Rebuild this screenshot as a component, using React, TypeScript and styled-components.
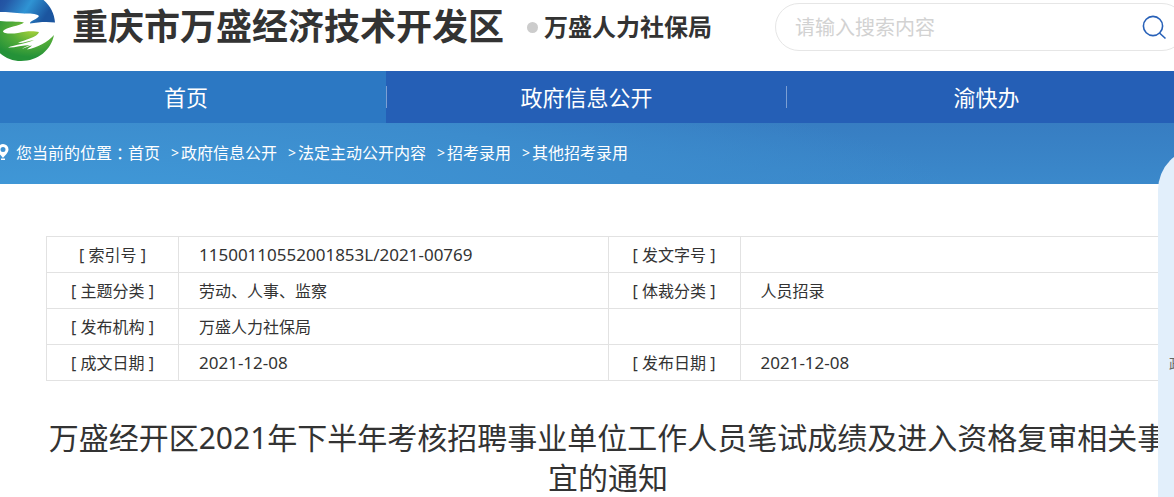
import React from "react";
import styled, { createGlobalStyle } from "styled-components";

const GlobalStyle = createGlobalStyle`
  *, *::before, *::after { box-sizing: border-box; }
  body {
    margin: 0;
    background: #fff;
    color: #333;
    font-family: "Noto Sans", "Noto Sans CJK SC", sans-serif;
    font-size: 16px;
  }
  a { color: inherit; text-decoration: none; }
`;

const Page = styled.div`
  position: relative;
  overflow: hidden;
`;

/* The site column is slightly wider than the window and bleeds off both sides. */
const Column = styled.div`
  margin: 0 -12px 0 -14px;
`;

const Header = styled(Column)`
  display: flex;
  align-items: center;
  height: 71px;
  padding-bottom: 17px;
`;

const Logo = styled.svg`
  flex: none;
  width: 70px;
  height: 70px;
  margin-right: 16px;
`;

const SiteName = styled.h1`
  margin: 0;
  font-size: 36px;
  line-height: 48px;
  font-weight: 700;
  white-space: nowrap;
`;

const Dot = styled.span`
  flex: none;
  width: 11px;
  height: 11px;
  margin: 0 6px 0 23px;
  border-radius: 50%;
  background: #ccc;
`;

const Department = styled.h2`
  margin: 0;
  font-size: 24px;
  line-height: 32px;
  font-weight: 700;
  white-space: nowrap;
`;

const Search = styled.form`
  display: flex;
  align-items: center;
  flex: 1;
  min-width: 0;
  height: 48px;
  margin-left: 63px;
  padding: 0 18px 0 19px;
  border: 1px solid #e6e6e6;
  border-radius: 24px;
`;

const SearchInput = styled.input`
  flex: 1;
  min-width: 0;
  height: 40px;
  padding: 0;
  border: 0;
  outline: 0;
  background: transparent;
  color: #333;
  font-family: inherit;
  font-size: 20px;
  &::placeholder { color: #d2d2d2; opacity: 1; }
`;

const SearchButton = styled.button`
  display: flex;
  padding: 0;
  border: 0;
  background: none;
  cursor: pointer;
`;

const NavBar = styled.nav`
  background: #255fb6;
`;

const NavList = styled(Column)`
  display: grid;
  grid-template-columns: repeat(3, 1fr);
`;

const NavItem = styled.a<{ $active?: boolean }>`
  display: flex;
  align-items: center;
  height: 52px;
  background: ${(p) => (p.$active ? "#2c78c3" : "transparent")};
  color: #fff;
  font-size: 22px;
  line-height: 32px;
  &:not(:first-child)::before {
    content: "";
    width: 1px;
    height: 22px;
    background: #7c9fd3;
  }
`;

const NavLabel = styled.span`
  flex: 1;
  text-align: center;
`;

const CrumbBand = styled.div`
  background: radial-gradient(ellipse 900px 130px at 5% 120%, #4099d8 0%, #3c8ccd 65%, rgba(60, 140, 205, 0) 100%),
    linear-gradient(to bottom, #377dc2, #3b89cb);
  color: #fff;
`;

const Crumbs = styled(Column)`
  display: flex;
  align-items: center;
  height: 61px;
  padding: 0 0 2px 10px;
  line-height: 24px;
  white-space: nowrap;
`;

const PinIcon = styled.svg`
  flex: none;
  width: 14px;
  height: 18px;
  margin-right: 6px;
`;

const Colon = styled.span`
  width: 16px;
  font-family: "Noto Sans CJK TC", sans-serif;
`;

const Crumb = styled.a`
  display: flex;
  & + &::before {
    content: ">";
    width: 10px;
    margin-left: 11px;
    font-size: 14px;
  }
`;

const Content = styled.main`
  padding: 52px 4px 0 46px;
`;

const InfoTable = styled.table`
  width: 100%;
  border-collapse: collapse;
  table-layout: fixed;
  line-height: 24px;
`;

const LabelCell = styled.th`
  height: 36px;
  padding: 0;
  border: 1px solid #e2e2e2;
  font-weight: 400;
  text-align: center;
`;

const ValueCell = styled.td`
  height: 36px;
  padding: 0 20px;
  border: 1px solid #e2e2e2;
`;

const Numeric = styled.span`
  font-size: 17px;
`;

const LabelCol = styled.col`
  width: 132px;
`;

const ArticleTitle = styled.h3`
  margin: 37px 0 0;
  font-size: 30px;
  line-height: 40px;
  font-weight: 400;
  text-align: center;
`;

const SidePanel = styled.aside`
  position: absolute;
  top: 148px;
  bottom: 0;
  right: -68px;
  width: 84px;
  padding: 206px 0 0 11px;
  border-radius: 42px 42px 0 0;
  background: #e2effb;
  color: #666;
  font-size: 14px;
  line-height: 20px;
`;

type Field = { label: string; value: string };

const rows: [Field, Field][] = [
  [{ label: "索引号", value: "11500110552001853L/2021-00769" }, { label: "发文字号", value: "" }],
  [{ label: "主题分类", value: "劳动、人事、监察" }, { label: "体裁分类", value: "人员招录" }],
  [{ label: "发布机构", value: "万盛人力社保局" }, { label: "", value: "" }],
  [{ label: "成文日期", value: "2021-12-08" }, { label: "发布日期", value: "2021-12-08" }],
];

const crumbs = ["首页", "政府信息公开", "法定主动公开内容", "招考录用", "其他招考录用"];

function FieldCells({ label, value }: Field) {
  return (
    <>
      <LabelCell scope="row">{label && `[ ${label} ]`}</LabelCell>
      <ValueCell>{/^\d/.test(value) ? <Numeric>{value}</Numeric> : value}</ValueCell>
    </>
  );
}

export default function App() {
  return (
    <Page>
      <GlobalStyle />
      <Header as="header">
        <Logo viewBox="-14 -8 70 70" aria-hidden="true">
          <defs>
            <linearGradient id="sky" x1="0" y1="0" x2="1" y2="0.3">
              <stop offset="0" stopColor="#1c3f94" />
              <stop offset="0.35" stopColor="#2458a6" />
              <stop offset="0.68" stopColor="#2f94d4" />
              <stop offset="1" stopColor="#1b559f" />
            </linearGradient>
            <radialGradient id="field" cx="0.68" cy="0.25" r="0.65">
              <stop offset="0" stopColor="#a4cf3a" />
              <stop offset="0.5" stopColor="#55ad39" />
              <stop offset="1" stopColor="#249238" />
            </radialGradient>
          </defs>
          <path
            fill="url(#sky)"
            d="M-13 12 C-8 -2 5 -8 21 -8 C40 -8 54 6 55 22.500 C47 21.500 38 22 30 23.500 C30 20 37 20 39 16 C36 13 29 14 24 13.500 C14 13 8 12 0 12Z"
          />
          <path
            fill="url(#field)"
            d="M-13 22 L0 21 C8 22 18 21 24 22.500 C20 26 6 27 3 31 C3 34 12 34 18 33 C26 31 34 31 39 32 C38 37 24 40 18 43 C22 43.500 29 41 34 40 C29 43 14 45 8 47.500 C14 48 22 45 30 45 C28 46 24 47 22 49 C25 48 29 46 32 45.500 C31 47 28 48 27 49.500 C37 48 48 42 54 35 C51 50 38 61 21 61 C2 61 -13 45 -13 22Z"
          />
        </Logo>
        <SiteName>重庆市万盛经济技术开发区</SiteName>
        <Dot />
        <Department>万盛人力社保局</Department>
        <Search role="search" onSubmit={(e) => e.preventDefault()}>
          <SearchInput type="search" aria-label="搜索" placeholder="请输入搜索内容" />
          <SearchButton type="submit" aria-label="搜索">
            <svg width="26" height="26" viewBox="0 0 26 26" fill="none" stroke="#2861b8" strokeWidth="1.6">
              <circle cx="12" cy="12" r="9.6" />
              <path d="M18.5 19 L24.5 24.5" />
            </svg>
          </SearchButton>
        </Search>
      </Header>

      <NavBar>
        <NavList>
          <NavItem href="#home" $active><NavLabel>首页</NavLabel></NavItem>
          <NavItem href="#open"><NavLabel>政府信息公开</NavLabel></NavItem>
          <NavItem href="#service"><NavLabel>渝快办</NavLabel></NavItem>
        </NavList>
      </NavBar>

      <CrumbBand>
        <Crumbs>
          <PinIcon viewBox="0 0 14 18" fill="#fff" aria-hidden="true">
            <path
              fillRule="evenodd"
              d="M7 0 a5.500 5.500 0 0 1 5.500 5.500 C12.500 8.500 9 11.500 7 14 C5 11.500 1.500 8.500 1.500 5.500 A5.500 5.500 0 0 1 7 0Z M7 3 a2.500 2.500 0 1 0 0 5 a2.500 2.500 0 1 0 0 -5Z"
            />
            <rect x="5" y="14.500" width="4" height="1.500" />
          </PinIcon>
          <span>您当前的位置</span>
          <Colon>：</Colon>
          {crumbs.map((name) => (
            <Crumb key={name} href="#list">{name}</Crumb>
          ))}
        </Crumbs>
      </CrumbBand>

      <Content>
        <InfoTable>
          <colgroup>
            <LabelCol />
            <col />
            <LabelCol />
            <col />
          </colgroup>
          <tbody>
            {rows.map(([left, right]) => (
              <tr key={left.label}>
                <FieldCells {...left} />
                <FieldCells {...right} />
              </tr>
            ))}
          </tbody>
        </InfoTable>
        <ArticleTitle>
          万盛经开区2021年下半年考核招聘事业单位工作人员笔试成绩及进入资格复审相关事宜的通知
        </ArticleTitle>
      </Content>

      <SidePanel>政</SidePanel>
    </Page>
  );
}
